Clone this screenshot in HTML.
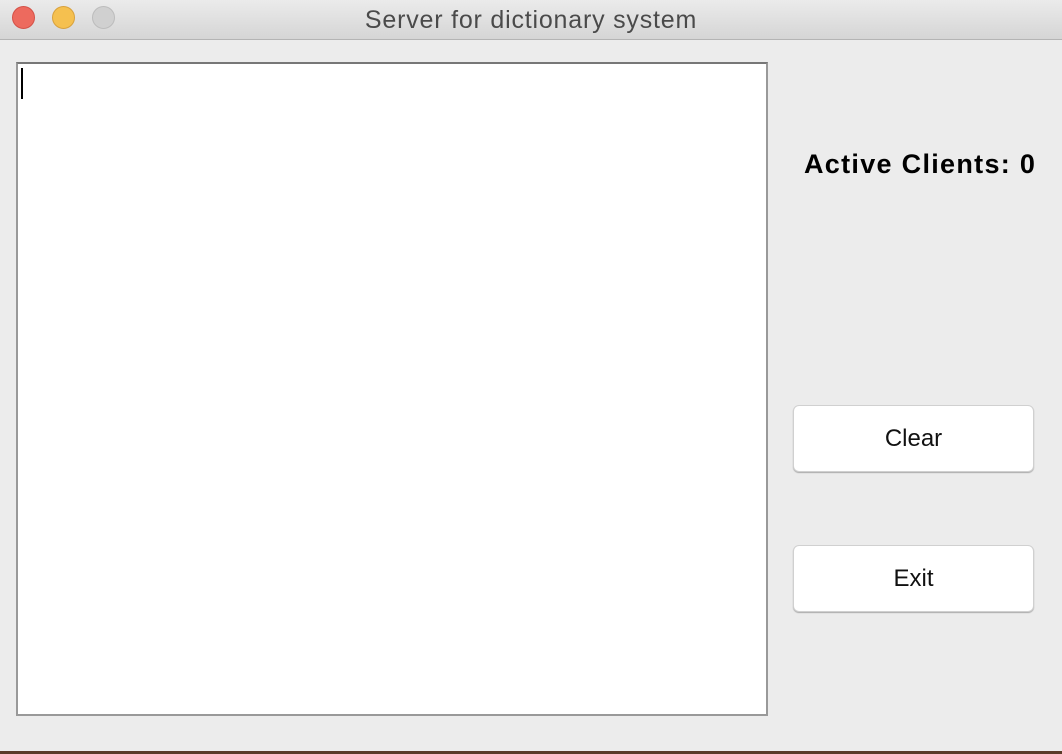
<!DOCTYPE html>
<html><head><style>
body{margin:0;width:1062px;height:754px;background:#ececec;position:relative;overflow:hidden;font-family:"Liberation Sans",sans-serif}
.tb{position:absolute;left:0;top:0;width:1062px;height:39px;background:linear-gradient(#ebebeb,#d5d5d5);border-bottom:1px solid #b4b4b4}
.c{position:absolute;top:6px;width:23px;height:23px;border-radius:50%;box-sizing:border-box}
.t{position:absolute;left:0;width:1062px;top:6px;text-align:center;font-size:25px;letter-spacing:0.8px;color:#4a4a4a}
.ta{position:absolute;left:16px;top:62px;width:752px;height:654px;box-sizing:border-box;background:#fff;border:2px solid #999;border-top-color:#777}
.cur{position:absolute;left:3px;top:4px;width:2px;height:31px;background:#000}
.lbl{position:absolute;left:804px;top:149px;font-size:27px;letter-spacing:1.3px;font-weight:bold;color:#000}
.b{position:absolute;left:793px;width:241px;height:67px;box-sizing:border-box;background:#fff;border-radius:6px;border:1px solid #d0d0d0;box-shadow:0 1px 1px #aaa;text-align:center;line-height:65px;font-size:24px;color:#111}
.bot{position:absolute;left:0;top:751px;width:1062px;height:3px;background:#5a3a28}
</style></head><body>
<div class="tb">
<div class="c" style="left:12px;background:#ed6a5e;border:1px solid #d45147"></div>
<div class="c" style="left:52px;background:#f5c04f;border:1px solid #d8a13c"></div>
<div class="c" style="left:92px;background:#d0d0d0;border:1px solid #bcbcbc"></div>
<div class="t">Server for dictionary system</div>
</div>
<div class="ta"><div class="cur"></div></div>
<div class="lbl">Active Clients: 0</div>
<div class="b" style="top:405px">Clear</div>
<div class="b" style="top:545px">Exit</div>
<div class="bot"></div>
</body></html>
